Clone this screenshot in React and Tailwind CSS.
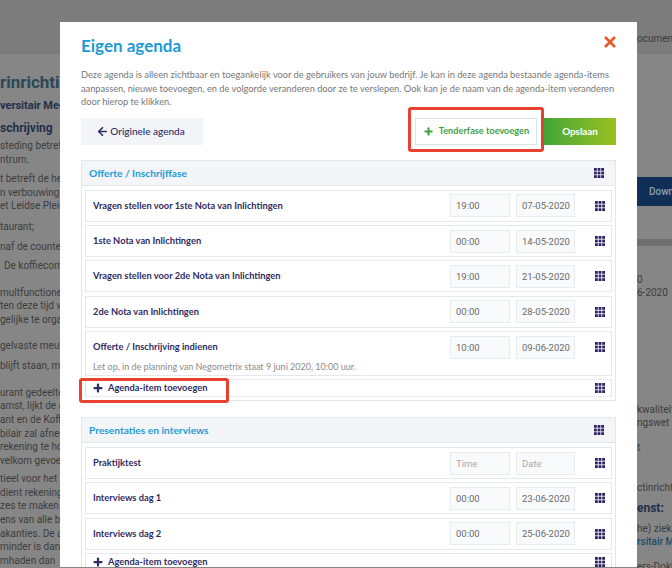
import { ArrowLeft, Plus } from "lucide-react";

const font = { fontFamily: 'Roboto, "Noto Sans", sans-serif' };

function GridIcon() {
  const cells = [0, 3.6, 7.2];
  return (
    <svg width="10" height="10" viewBox="0 0 10 10" className="shrink-0">
      {cells.map((y) =>
        cells.map((x) => (
          <rect key={`${x}-${y}`} x={x} y={y} width="2.8" height="2.8" fill="#2b2467" />
        ))
      )}
    </svg>
  );
}

function TimeInput({ value, placeholder, className }) {
  return (
    <input
      readOnly
      value={value}
      placeholder={placeholder}
      className={`h-[23px] bg-[#f9fafc] border border-[#e8ebef] font-['Roboto',sans-serif] text-[9.5px] text-[#6a6a6a] placeholder:text-[#a9a9a9] outline-none ${className}`}
    />
  );
}

function AgendaRow({ title, time, date, note }) {
  return (
    <div className={`bg-white border border-[#e6e8ec] pl-[7px] pr-[6px] ${note ? "h-[45px] pt-[4px]" : "h-[32px] flex items-center"}`}>
      <div className="flex items-center w-full">
        <span className="flex-1 text-[9.3px] font-bold text-[#2f2b63] whitespace-nowrap">{title}</span>
        <TimeInput value={time} placeholder="Time" className="w-[60px] pl-[5px] mr-[6px]" />
        <TimeInput value={date} placeholder="Date" className="w-[59px] pl-[5px] mr-[20px]" />
        <GridIcon />
      </div>
      {note && <p className="text-[9px] leading-none mt-[3px] text-[#8b8b8b]">{note}</p>}
    </div>
  );
}

function AddRow({ className }) {
  return (
    <div className={`bg-white border border-[#e6e8ec] pl-[7px] pr-[6px] flex items-center justify-between ${className}`}>
      <span className="flex items-center gap-[4.5px] text-[9.3px] font-bold text-[#2f2b63]">
        <Plus size={12} strokeWidth={4.5} className="-ml-[1.5px]" />
        Agenda-item toevoegen
      </span>
      <GridIcon />
    </div>
  );
}

function Phase({ title, children }) {
  return (
    <section className="border border-[#e3e6ea]">
      <div className="h-[25px] bg-[#f3f5f8] border-b border-[#e3e6ea] px-[7px] pr-[11px] flex items-center justify-between">
        <h3 className="pt-[1px] text-[10.2px] font-bold text-[#1d9ad6]">{title}</h3>
        <GridIcon />
      </div>
      <div className="flex flex-col gap-[3.25px] px-[3px] pt-[4px] pb-[3px]">{children}</div>
    </section>
  );
}

function Behind({ lines, className }) {
  return (
    <div className={className}>
      {lines.map((l) => (
        <p key={l} className="whitespace-nowrap">{l}</p>
      ))}
    </div>
  );
}

export default function App() {
  return (
    <div className="relative w-[672px] h-[568px] overflow-hidden bg-[#868686] text-[#3d3d3d]" style={font}>
      <div className="h-[54px] bg-[#7c7c7c] flex justify-end items-start pt-[31px]">
        <span className="w-[35px] overflow-hidden text-[10px] whitespace-nowrap">ocumenten</span>
      </div>

      <div className="flex justify-between">
        {/* tekst links van de modal */}
        <div className="w-[60px] overflow-hidden text-[10px] leading-[13.6px]">
          <p className="mt-[17px] text-[17px] leading-[22px] font-bold text-[#2c4757] whitespace-nowrap">rinrichting</p>
          <p className="mt-[5px] text-[11px] font-bold leading-[16px] text-[#23304a] whitespace-nowrap">versitair Medisch</p>
          <p className="mt-[6px] text-[12px] font-bold leading-[17px] text-[#23304a] whitespace-nowrap">schrijving</p>
          <Behind className="mt-[2px]" lines={["steding betreft", "ntrum."]} />
          <Behind className="mt-[6px]" lines={["t betreft de herin", "n verbouwing. In", "et Leidse Plein :"]} />
          <Behind className="mt-[7px]" lines={["taurant;"]} />
          <Behind className="mt-[6px]" lines={["naf de counter v"]} />
          <Behind className="mt-[6px] pl-[4px]" lines={["De koffiecorner"]} />
          <Behind className="mt-[13px]" lines={["multfunctionele", "ten deze tijd wo", "gelijke te organ"]} />
          <Behind className="mt-[12px]" lines={["gelvaste meubils"]} />
          <Behind className="mt-[7px]" lines={["blijft staan, ma"]} />
          <Behind className="mt-[13px]" lines={["urant gedeelte", "amst, lijkt de an", "ant en de Koffie", "bilair zal afnem", "rekening te hou", "velkom gevoel"]} />
          <Behind className="mt-[5px]" lines={["tieel voor het L", "dient rekening t", "zes te maken.", "ens van alle bet", "akanties. De ac", "minder is dan d", "mhaden dan"]} />
        </div>

        {/* tekst rechts van de modal */}
        <div className="w-[35px] overflow-hidden text-[10px] leading-[13px]">
          <div className="mt-[123px] h-[29px] bg-[#0f2f57] text-[#8f9eb0] flex items-center font-medium pl-[12px]">Download</div>
          <div className="mt-[33px] h-[7px] bg-[#6f6f6f]" />
          <Behind className="mt-[27px]" lines={["0", "6-2020"]} />
          <Behind className="mt-[104px]" lines={["kwaliteit", "ngswet 2"]} />
          <p className="mt-[12px] text-[#1b4c66]">t</p>
          <p className="mt-[27px] whitespace-nowrap">ctinrichting</p>
          <p className="mt-[6px] text-[12px] leading-[17px] font-bold text-[#23304a]">enst:</p>
          <p className="mt-[5px] whitespace-nowrap">he) ziekenhuis</p>
          <p className="whitespace-nowrap text-[#1b4c66] font-medium">rsitair Medisch</p>
          <p className="mt-[12px] whitespace-nowrap">ers-Dokkum</p>
        </div>
      </div>

      {/* modal */}
      <div className="absolute left-[60px] top-[22px] w-[577px] h-[545px] bg-white overflow-hidden pl-[21px] pr-[21px] pt-[12px] font-['Lato',sans-serif]">
        <div className="flex items-start justify-between">
          <h1 className="text-[17px] leading-[24px] font-bold text-[#1d9ad6]">Eigen agenda</h1>
          <svg width="12" height="12" viewBox="0 0 12 12" className="mt-[2px]">
            <path d="M1 1 L11 11 M11 1 L1 11" stroke="#e8562a" strokeWidth="2.6" />
          </svg>
        </div>
        <p className="mt-[10px] text-[9.25px] leading-[13.6px] text-[#777] whitespace-nowrap">
          Deze agenda is alleen zichtbaar en toegankelijk voor de gebruikers van jouw bedrijf. Je kan in deze agenda bestaande agenda-items
          <br />
          aanpassen, nieuwe toevoegen, en de volgorde veranderen door ze te verslepen. Ook kan je de naam van de agenda-item veranderen
          <br />
          door hierop te klikken.
        </p>

        <div className="mt-[9px] flex items-center justify-between h-[27px]">
          <button className="w-[122px] h-full bg-[#f2f4f8] flex items-center justify-center gap-[1px] pr-[3px] text-[10px] font-medium text-[#2f2b63]">
            <ArrowLeft size={13} strokeWidth={3} />
            Originele agenda
          </button>
          <div className="flex h-full">
            <button className="w-[122px] h-full bg-white border border-[#dfe2e6] flex items-center justify-center gap-[5px] text-[9.2px] font-bold whitespace-nowrap text-[#43a047]">
              <Plus size={11} strokeWidth={4.5} />
              Tenderfase toevoegen
            </button>
            <button className="ml-[7px] w-[72px] h-full bg-gradient-to-r from-[#3fa535] to-[#97c11f] text-[9.8px] font-bold text-white">
              Opslaan
            </button>
          </div>
        </div>

        <div className="mt-[15px] flex flex-col gap-[16px]">
          <Phase title="Offerte / Inschrijffase">
            <AgendaRow title="Vragen stellen voor 1ste Nota van Inlichtingen" time="19:00" date="07-05-2020" />
            <AgendaRow title="1ste Nota van Inlichtingen" time="00:00" date="14-05-2020" />
            <AgendaRow title="Vragen stellen voor 2de Nota van Inlichtingen" time="19:00" date="21-05-2020" />
            <AgendaRow title="2de Nota van Inlichtingen" time="00:00" date="28-05-2020" />
            <AgendaRow
              title="Offerte / Inschrijving indienen"
              time="10:00"
              date="09-06-2020"
              note="Let op, in de planning van Negometrix staat 9 juni 2020, 10:00 uur."
            />
            <AddRow className="h-[18px]" />
          </Phase>
          <Phase title="Presentaties en interviews">
            <AgendaRow title="Praktijktest" time="" date="" />
            <AgendaRow title="Interviews dag 1" time="00:00" date="23-06-2020" />
            <AgendaRow title="Interviews dag 2" time="00:00" date="25-06-2020" />
            <AddRow className="h-[18px]" />
          </Phase>
        </div>
      </div>

      {/* rode markeringen */}
      <div className="absolute left-[408px] top-[107px] w-[136px] h-[45px] border-[3px] border-[#e8412f] rounded-[3px]" />
      <div className="absolute left-[79px] top-[378px] w-[150px] h-[25px] border-[3px] border-[#e8412f] rounded-[3px]" />
    </div>
  );
}
